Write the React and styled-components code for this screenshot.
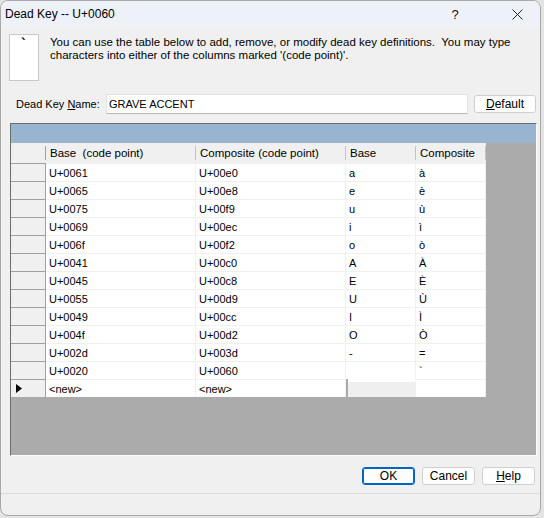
import React from 'react';
import styled, { createGlobalStyle } from 'styled-components';

const GlobalStyle = createGlobalStyle`
  html, body {
    margin: 0;
    padding: 0;
    background: #e4e4e4;
  }
  body {
    font-family: 'Liberation Sans', Arial, sans-serif;
    color: #000;
  }
`;

const Window = styled.div`
  width: 541px;
  height: 516px;
  box-sizing: border-box;
  border: 1px solid #a8a8a8;
  border-radius: 8px;
  overflow: hidden;
  background: #f0f0f0;
  display: flex;
  flex-direction: column;
`;

const TitleBar = styled.div`
  height: 26px;
  flex: none;
  display: flex;
  align-items: center;
  padding-left: 4px;
  background: #eef2f8;
  font-size: 12px;
`;

const TitleText = styled.div`
  flex: 1;
`;

const TitleButton = styled.div`
  width: 46px;
  height: 26px;
  display: flex;
  align-items: center;
  justify-content: center;
  margin-right: ${p => p.$gap || 0}px;
  font-size: 13px;
  color: #111;
`;

const Body = styled.div`
  flex: 1;
  display: flex;
  flex-direction: column;
  padding: 7px 3px 0 9px;
`;

const InfoRow = styled.div`
  display: flex;
  gap: 11px;
`;

const IconBox = styled.div`
  width: 28px;
  height: 45px;
  border: 1px solid #c8c8c8;
  background: #fff;
  position: relative;
  margin-left: -1px;
`;

const Grave = styled.span`
  position: absolute;
  left: 11px;
  top: 1px;
  font-size: 14px;
  font-weight: bold;
`;

const Message = styled.div`
  font-size: 11.5px;
  line-height: 13px;
  padding-top: 2px;
  color: #000;
`;

const NameRow = styled.div`
  display: flex;
  align-items: center;
  margin-top: 13px;
  height: 20px;
`;

const Label = styled.label`
  font-size: 11px;
  width: 90px;
  padding-left: 6px;
`;

const Underline = styled.span`
  text-decoration: underline;
`;

const TextInput = styled.div`
  width: 362px;
  height: 20px;
  box-sizing: border-box;
  background: #fff;
  border: 1px solid #e2e2e2;
  border-bottom-color: #b8b8b8;
  font-size: 11px;
  display: flex;
  align-items: center;
  padding-left: 2px;
`;

const Button = styled.div`
  width: ${p => p.$w || 53}px;
  height: 18px;
  box-sizing: border-box;
  border: 1px solid ${p => (p.$primary ? '#0067c0' : '#cfcfcf')};
  box-shadow: ${p => (p.$primary ? 'inset 0 0 0 1px #0067c0' : 'none')};
  border-radius: 3px;
  background: #fdfdfd;
  font-size: 12px;
  display: flex;
  align-items: center;
  justify-content: center;
`;

const DefaultButton = styled(Button)`
  margin-left: 6px;
  margin-top: -1px;
`;

const GridFrame = styled.div`
  margin-top: 9px;
  height: 333px;
  box-sizing: border-box;
  border-top: 1px solid #6d6d6d;
  border-left: 1px solid #6d6d6d;
  border-right: 1px solid #fcfcfc;
  border-bottom: 1px solid #fcfcfc;
  background: #ababab;
  width: 527px;
`;

const Caption = styled.div`
  height: 19px;
  background: #99b4d1;
`;

const Table = styled.div`
  display: grid;
  grid-template-columns: 35px 150px 150px 70px 70px;
  grid-template-rows: 20px;
  grid-auto-rows: 18px;
  width: 475px;
`;

const HeadCell = styled.div`
  background: #f0f0f0;
  font-size: 11.5px;
  display: flex;
  align-items: center;
  padding-left: 4px;
  position: relative;
  white-space: pre;
  &::after {
    content: '';
    position: absolute;
    right: 0;
    top: 3px;
    bottom: 3px;
    width: 1px;
    background: ${p => (p.$corner ? '#a0a0a0' : '#c4c4c4')};
  }
`;

const RowHead = styled.div`
  background: #f0f0f0;
  box-sizing: border-box;
  border-top: 1px solid #a0a0a0;
  border-right: 1px solid #a0a0a0;
  display: flex;
  align-items: center;
  padding-left: 5px;
`;

const Cell = styled.div`
  background: ${p => (p.$blank ? '#efefef' : '#fff')};
  box-sizing: border-box;
  border-top: 1px solid #f0f0f0;
  border-right: 1px solid #f0f0f0;
  ${p => p.$blank && 'border-top: 3px solid #fff; margin-left: 2px;'}
  font-size: 11px;
  display: flex;
  align-items: center;
  padding-left: 3px;
  white-space: pre;
`;

const ButtonRow = styled.div`
  display: flex;
  justify-content: flex-end;
  gap: 7px;
  margin-top: 11px;
  padding-right: 2px;
`;

const Separator = styled.div`
  margin: 8px -3px 0 -9px;
  height: 1px;
  background: #dadada;
`;

const Arrow = () => (
  <svg width="6" height="9" viewBox="0 0 6 9">
    <polygon points="0,0 6,4.5 0,9" fill="#000" />
  </svg>
);

const rows = [
  ['U+0061', 'U+00e0', 'a', 'à'],
  ['U+0065', 'U+00e8', 'e', 'è'],
  ['U+0075', 'U+00f9', 'u', 'ù'],
  ['U+0069', 'U+00ec', 'i', 'ì'],
  ['U+006f', 'U+00f2', 'o', 'ò'],
  ['U+0041', 'U+00c0', 'A', 'À'],
  ['U+0045', 'U+00c8', 'E', 'È'],
  ['U+0055', 'U+00d9', 'U', 'Ù'],
  ['U+0049', 'U+00cc', 'I', 'Ì'],
  ['U+004f', 'U+00d2', 'O', 'Ò'],
  ['U+002d', 'U+003d', '-', '='],
  ['U+0020', 'U+0060', ' ', '`'],
];

const headers = ['Base  (code point)', 'Composite (code point)', 'Base', 'Composite'];

export default function App() {
  return (
    <>
      <GlobalStyle />
      <Window>
        <TitleBar>
          <TitleText>Dead Key -- U+0060</TitleText>
          <TitleButton $gap={16}>?</TitleButton>
          <TitleButton>
            <svg width="11" height="11" viewBox="0 0 11 11">
              <path d="M0.5 0.5 L10.5 10.5 M10.5 0.5 L0.5 10.5" stroke="#222" strokeWidth="1" />
            </svg>
          </TitleButton>
        </TitleBar>
        <Body>
          <InfoRow>
            <IconBox>
              <Grave>`</Grave>
            </IconBox>
            <Message>
              You can use the table below to add, remove, or modify dead key definitions.&nbsp; You may type
              <br />
              characters into either of the columns marked '(code point)'.
            </Message>
          </InfoRow>
          <NameRow>
            <Label>
              Dead Key <Underline>N</Underline>ame:
            </Label>
            <TextInput>GRAVE ACCENT</TextInput>
            <DefaultButton $w={62}>
              <Underline>D</Underline>efault
            </DefaultButton>
          </NameRow>
          <GridFrame>
            <Caption />
            <Table>
              <HeadCell $corner />
              {headers.map(h => (
                <HeadCell key={h}>{h}</HeadCell>
              ))}
              {rows.map(r => (
                <React.Fragment key={r[0]}>
                  <RowHead />
                  {r.map((c, i) => (
                    <Cell key={i}>{c}</Cell>
                  ))}
                </React.Fragment>
              ))}
              <RowHead>
                <Arrow />
              </RowHead>
              <Cell>&lt;new&gt;</Cell>
              <Cell>&lt;new&gt;</Cell>
              <Cell $blank />
              <Cell />
            </Table>
          </GridFrame>
          <ButtonRow>
            <Button $primary>OK</Button>
            <Button>Cancel</Button>
            <Button>
              <Underline>H</Underline>elp
            </Button>
          </ButtonRow>
          <Separator />
        </Body>
      </Window>
    </>
  );
}
